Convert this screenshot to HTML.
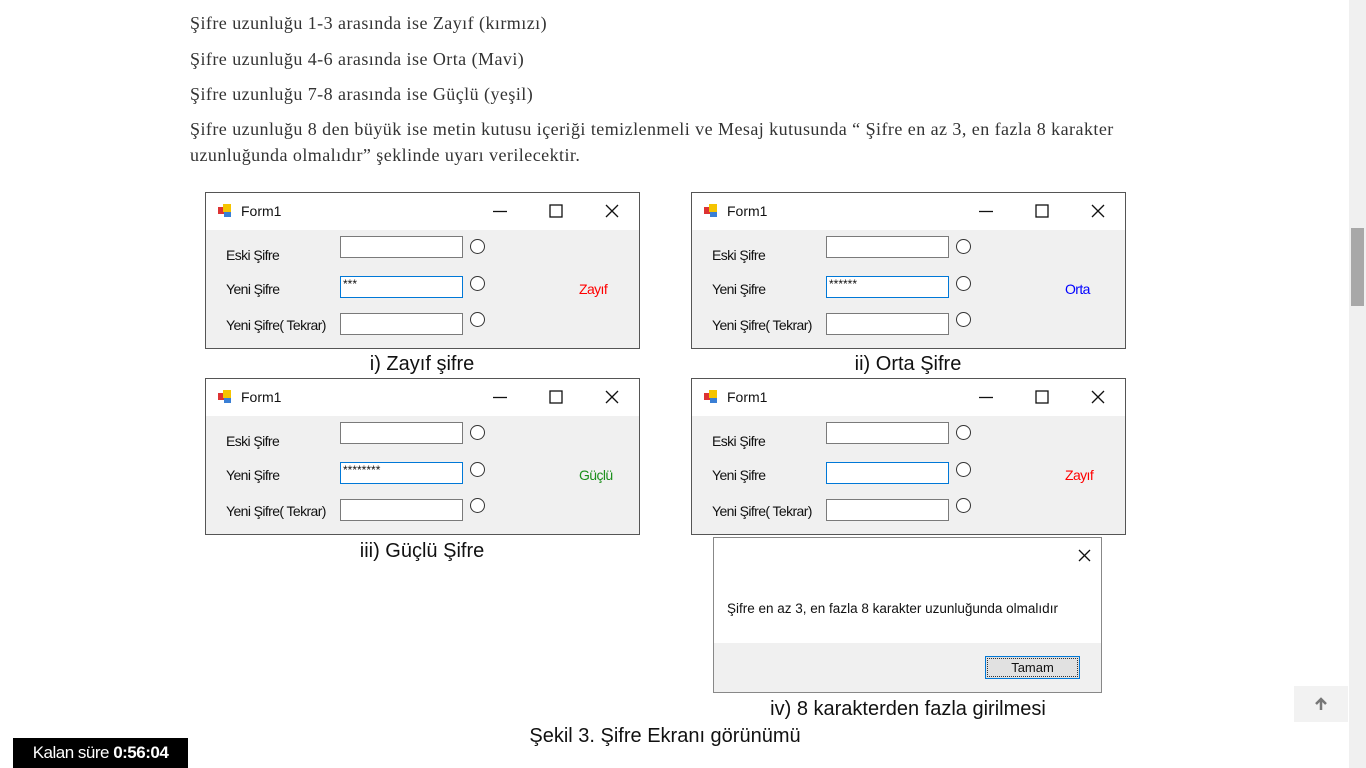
<!DOCTYPE html><html><head><meta charset="utf-8"><style>
body{margin:0;width:1366px;height:768px;overflow:hidden;background:#fff;position:relative;font-family:"Liberation Serif",serif}
.t{position:absolute;left:190px;font-size:18px;letter-spacing:0.45px;color:#333;white-space:nowrap}
.cap{position:absolute;font-family:"Liberation Sans",sans-serif;font-size:20px;color:#111;white-space:nowrap;transform:translateX(-50%)}
.f{position:absolute;width:433px;height:155px;border:1px solid #555;background:#f0f0f0;font-family:"Liberation Sans",sans-serif;font-size:14px;color:#111}
.tb{position:absolute;left:0;top:0;right:0;height:37px;background:#fff}
.ic{position:absolute;left:12px;top:11px;width:14px;height:14px}
.ttl{position:absolute;left:35px;top:10px;font-size:14px}
.ctl{position:absolute;top:11px}
.lb{position:absolute;left:20px;letter-spacing:-0.6px}
.in{position:absolute;left:134px;width:119px;height:20px;border:1px solid #7a7a7a;background:#fff;font-size:12px;line-height:14px;padding-left:2px;box-sizing:content-box}
.in.a{border-color:#0078d7}
.rd{position:absolute;left:264px;width:13px;height:13px;border:1px solid #333;border-radius:50%;background:#fff}
.st{position:absolute;left:373px;top:88px;letter-spacing:-0.6px}
</style></head><body>
<div class="t" style="top:13px">Şifre uzunluğu 1-3 arasında ise Zayıf (kırmızı)</div>
<div class="t" style="top:49px">Şifre uzunluğu 4-6 arasında ise Orta (Mavi)</div>
<div class="t" style="top:84px">Şifre uzunluğu 7-8 arasında ise Güçlü (yeşil)</div>
<div class="t" style="top:119px">Şifre uzunluğu 8 den büyük ise metin kutusu içeriği temizlenmeli ve Mesaj kutusunda “ Şifre en az 3, en fazla 8 karakter</div>
<div class="t" style="top:145px">uzunluğunda olmalıdır” şeklinde uyarı verilecektir.</div>

<div class="f" style="left:205px;top:192px">
<div class="tb"><svg class="ic" viewBox="0 0 14 14"><rect x="0" y="3" width="7" height="7" fill="#d33"/><rect x="5" y="0" width="8" height="8" fill="#f5c400"/><rect x="6" y="8" width="7" height="5" fill="#3a7fd5"/></svg><span class="ttl">Form1</span>
<svg class="ctl" style="left:287px" width="14" height="14"><path d="M0 7.5H14" stroke="#111" stroke-width="1.3"/></svg><svg class="ctl" style="left:343px" width="14" height="14"><rect x="1" y="1" width="12" height="12" fill="none" stroke="#111" stroke-width="1.3"/></svg><svg class="ctl" style="left:399px" width="14" height="14"><path d="M1 1L13 13M13 1L1 13" stroke="#111" stroke-width="1.3"/></svg></div>
<span class="lb" style="top:54px">Eski Şifre</span><span class="lb" style="top:88px">Yeni Şifre</span><span class="lb" style="top:124px">Yeni Şifre( Tekrar)</span>
<div class="in" style="top:43px"></div><div class="in a" style="top:83px">***</div><div class="in" style="top:120px"></div>
<div class="rd" style="top:46px"></div><div class="rd" style="top:83px"></div><div class="rd" style="top:119px"></div>
<span class="st" style="color:#f00">Zayıf</span></div>

<div class="f" style="left:691px;top:192px">
<div class="tb"><svg class="ic" viewBox="0 0 14 14"><rect x="0" y="3" width="7" height="7" fill="#d33"/><rect x="5" y="0" width="8" height="8" fill="#f5c400"/><rect x="6" y="8" width="7" height="5" fill="#3a7fd5"/></svg><span class="ttl">Form1</span>
<svg class="ctl" style="left:287px" width="14" height="14"><path d="M0 7.5H14" stroke="#111" stroke-width="1.3"/></svg><svg class="ctl" style="left:343px" width="14" height="14"><rect x="1" y="1" width="12" height="12" fill="none" stroke="#111" stroke-width="1.3"/></svg><svg class="ctl" style="left:399px" width="14" height="14"><path d="M1 1L13 13M13 1L1 13" stroke="#111" stroke-width="1.3"/></svg></div>
<span class="lb" style="top:54px">Eski Şifre</span><span class="lb" style="top:88px">Yeni Şifre</span><span class="lb" style="top:124px">Yeni Şifre( Tekrar)</span>
<div class="in" style="top:43px"></div><div class="in a" style="top:83px">******</div><div class="in" style="top:120px"></div>
<div class="rd" style="top:46px"></div><div class="rd" style="top:83px"></div><div class="rd" style="top:119px"></div>
<span class="st" style="color:#00f">Orta</span></div>

<div class="f" style="left:205px;top:378px">
<div class="tb"><svg class="ic" viewBox="0 0 14 14"><rect x="0" y="3" width="7" height="7" fill="#d33"/><rect x="5" y="0" width="8" height="8" fill="#f5c400"/><rect x="6" y="8" width="7" height="5" fill="#3a7fd5"/></svg><span class="ttl">Form1</span>
<svg class="ctl" style="left:287px" width="14" height="14"><path d="M0 7.5H14" stroke="#111" stroke-width="1.3"/></svg><svg class="ctl" style="left:343px" width="14" height="14"><rect x="1" y="1" width="12" height="12" fill="none" stroke="#111" stroke-width="1.3"/></svg><svg class="ctl" style="left:399px" width="14" height="14"><path d="M1 1L13 13M13 1L1 13" stroke="#111" stroke-width="1.3"/></svg></div>
<span class="lb" style="top:54px">Eski Şifre</span><span class="lb" style="top:88px">Yeni Şifre</span><span class="lb" style="top:124px">Yeni Şifre( Tekrar)</span>
<div class="in" style="top:43px"></div><div class="in a" style="top:83px">********</div><div class="in" style="top:120px"></div>
<div class="rd" style="top:46px"></div><div class="rd" style="top:83px"></div><div class="rd" style="top:119px"></div>
<span class="st" style="color:#1a8f1a">Güçlü</span></div>

<div class="f" style="left:691px;top:378px">
<div class="tb"><svg class="ic" viewBox="0 0 14 14"><rect x="0" y="3" width="7" height="7" fill="#d33"/><rect x="5" y="0" width="8" height="8" fill="#f5c400"/><rect x="6" y="8" width="7" height="5" fill="#3a7fd5"/></svg><span class="ttl">Form1</span>
<svg class="ctl" style="left:287px" width="14" height="14"><path d="M0 7.5H14" stroke="#111" stroke-width="1.3"/></svg><svg class="ctl" style="left:343px" width="14" height="14"><rect x="1" y="1" width="12" height="12" fill="none" stroke="#111" stroke-width="1.3"/></svg><svg class="ctl" style="left:399px" width="14" height="14"><path d="M1 1L13 13M13 1L1 13" stroke="#111" stroke-width="1.3"/></svg></div>
<span class="lb" style="top:54px">Eski Şifre</span><span class="lb" style="top:88px">Yeni Şifre</span><span class="lb" style="top:124px">Yeni Şifre( Tekrar)</span>
<div class="in" style="top:43px"></div><div class="in a" style="top:83px"></div><div class="in" style="top:120px"></div>
<div class="rd" style="top:46px"></div><div class="rd" style="top:83px"></div><div class="rd" style="top:119px"></div>
<span class="st" style="color:#f00">Zayıf</span></div>

<div style="position:absolute;left:713px;top:537px;width:387px;height:154px;border:1px solid #888;background:#fff;font-family:'Liberation Sans',sans-serif;font-size:13.5px;color:#111">
<svg style="position:absolute;left:364px;top:11px" width="13" height="13"><path d="M1 1L12 12M12 1L1 12" stroke="#111" stroke-width="1.3"/></svg>
<span style="position:absolute;left:13px;top:63px">Şifre en az 3, en fazla 8 karakter uzunluğunda olmalıdır</span>
<div style="position:absolute;left:0;right:0;top:105px;bottom:0;background:#f0f0f0"></div>
<div style="position:absolute;left:271px;top:118px;width:93px;height:21px;border:1px solid #0078d7;background:#e1e1e1;text-align:center;line-height:21px;outline:1px dotted #333;outline-offset:-3px;font-size:13px">Tamam</div>
</div>

<div class="cap" style="left:422px;top:353px">i) Zayıf şifre</div>
<div class="cap" style="left:908px;top:353px">ii) Orta Şifre</div>
<div class="cap" style="left:422px;top:540px">iii) Güçlü Şifre</div>
<div class="cap" style="left:908px;top:698px">iv) 8 karakterden fazla girilmesi</div>
<div class="cap" style="left:665px;top:725px">Şekil 3. Şifre Ekranı görünümü</div>

<div style="position:absolute;left:13px;top:738px;width:175px;height:30px;background:#000;color:#fff;font-family:'Liberation Sans',sans-serif;font-size:17px;line-height:30px;text-align:center;letter-spacing:-0.5px">Kalan süre <b>0:56:04</b></div>

<div style="position:absolute;left:1294px;top:686px;width:54px;height:36px;background:#f2f2f2"><svg style="position:absolute;left:20px;top:11px" width="14" height="14"><path d="M7 13V2M2 7L7 2L12 7" fill="none" stroke="#777" stroke-width="2.5"/></svg></div>
<div style="position:absolute;left:1349px;top:0;width:17px;height:768px;background:#f0f0f0"></div>
<div style="position:absolute;left:1351px;top:228px;width:13px;height:78px;background:#a8a8a8"></div>
</body></html>
